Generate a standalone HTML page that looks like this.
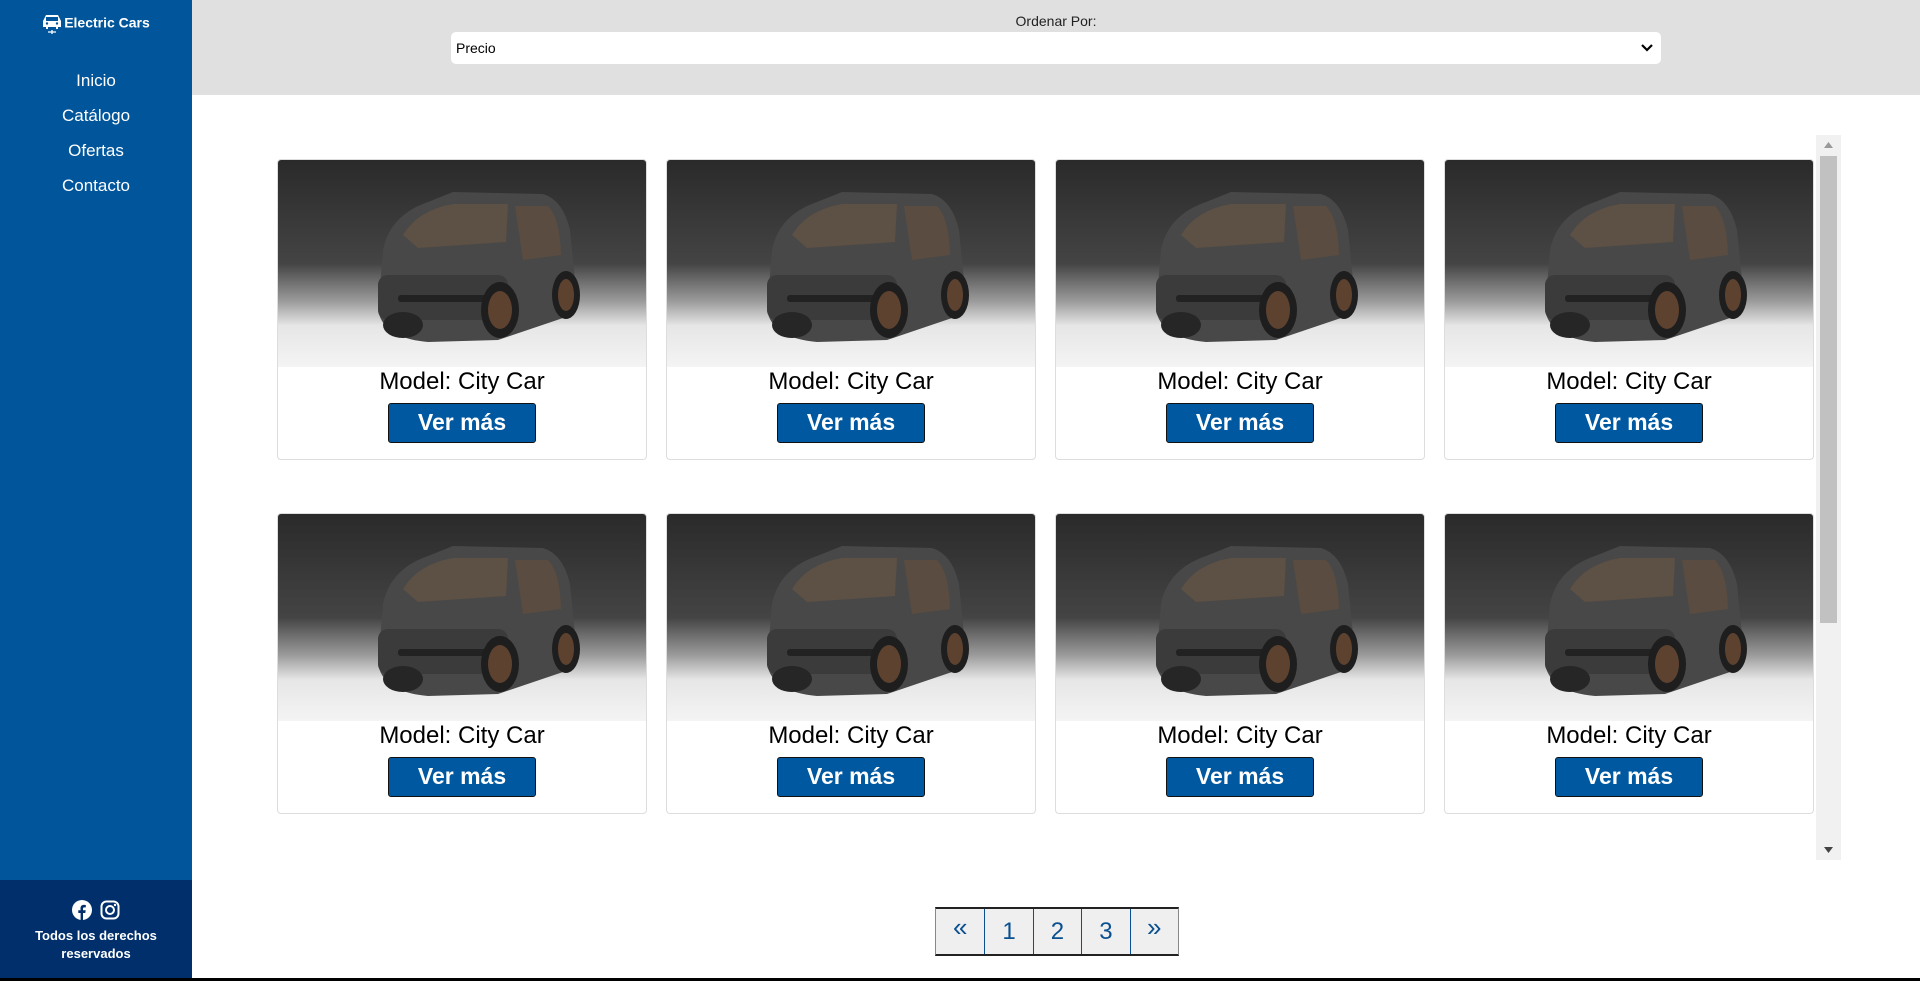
<!DOCTYPE html>
<html><head><meta charset="utf-8"><style>
*{box-sizing:border-box;margin:0;padding:0}
body{width:1920px;height:981px;overflow:hidden;font-family:"Liberation Sans",sans-serif;background:#fff;position:relative}
.side{position:absolute;left:0;top:0;width:192px;height:981px;background:#00559b}
.logo{position:absolute;top:12px;left:0;width:192px;text-align:center;color:#fff;font-weight:bold;font-size:14px}
.logo svg{vertical-align:middle;margin-right:2px}
.nav{position:absolute;top:69px;width:192px;text-align:center}
.nav div{color:#fff;font-size:17px;height:35px;line-height:24px}
.foot{position:absolute;left:0;top:880px;width:192px;height:98px;background:#002f6b;text-align:center;color:#fff;font-weight:bold;font-size:13px}
.icons{margin-top:20px;height:22px}
.icons svg{margin:0 4px;vertical-align:middle}
.bl{position:absolute;left:0;top:978px;width:1920px;height:3px;background:#000}
.top{position:absolute;left:192px;top:0;width:1728px;height:95px;background:#e0e0e0}
.lbl{position:absolute;left:0;width:1728px;top:13px;text-align:center;font-size:14px;color:#222}
.sel{position:absolute;left:259px;top:32px;width:1210px;height:32px;background:#fff;border-radius:5px;font-size:14px;padding:8px 5px;color:#000}
.sel svg{position:absolute;right:8px;top:12px}
.sb{position:absolute;left:1816px;top:135px;width:25px;height:725px;background:#f1f1f1}
.thumb{position:absolute;left:4px;top:21px;width:17px;height:467px;background:#c1c1c1}
.card{position:absolute;width:370px;height:301px;border:1px solid #ddd;border-radius:4px;background:#fff;text-align:center;overflow:hidden}
.card svg{display:block}
.card h3{font-weight:normal;font-size:24px;color:#000;margin-top:0;height:32px;line-height:30px}
.btn{display:inline-block;margin-top:4px;width:148px;height:40px;background:#0059a0;border:1.5px solid #111;border-radius:3px;color:#fff;font-weight:bold;font-size:23px;line-height:36px}
.pg{position:absolute;left:935px;top:907px;height:49px;display:flex;border-top:2px solid #222;border-bottom:2px solid #222;border-left:1px solid #888;border-right:1px solid #888;background:#efefef}
.pg div{width:48.4px;text-align:center;color:#0a4f8f;font-size:24px;line-height:45px;border-left:1px solid #0a4f8f}
.pg div.a{line-height:36px;font-size:26px}
.pg div:first-child{border-left:none}
</style></head><body>
<div class="side">
 <div class="logo"><svg width="20" height="24" viewBox="0 0 20 24"><path d="M4 3h12l3 6v6h-3v2h-2v-2H6v2H4v-2H1V9z" fill="#fff"/><rect x="4" y="5" width="12" height="4" fill="#00559b"/><circle cx="5" cy="11.5" r="1.2" fill="#00559b"/><circle cx="15" cy="11.5" r="1.2" fill="#00559b"/><path d="M6 20h8M10 18v4" stroke="#fff" stroke-width="1.3"/></svg>Electric Cars</div>
 <div class="nav"><div>Inicio</div><div>Catálogo</div><div>Ofertas</div><div>Contacto</div></div>
 <div class="foot">
  <div class="icons"><svg width="20" height="20" viewBox="0 0 20 20"><circle cx="10" cy="10" r="10" fill="#fff"/><path d="M11 20v-7h2.3l.4-2.7H11V8.7c0-.8.3-1.3 1.4-1.3h1.4V5c-.3 0-1.1-.1-2-.1-2 0-3.3 1.2-3.3 3.4v2H6.3V13h2.3v7z" fill="#002f6b"/></svg><svg width="20" height="20" viewBox="0 0 20 20"><rect x="1.5" y="1.5" width="17" height="17" rx="5" fill="none" stroke="#fff" stroke-width="2"/><circle cx="10" cy="10" r="4" fill="none" stroke="#fff" stroke-width="2"/><circle cx="15" cy="5" r="1.2" fill="#fff"/></svg></div>
  <div style="margin-top:5px;line-height:18px">Todos los derechos<br>reservados</div>
 </div>
</div>
<div class="bl"></div>
<div class="top"><div class="lbl">Ordenar Por:</div><div class="sel">Precio<svg width="12" height="8" viewBox="0 0 12 8"><path d="M1 1l5 5 5-5" fill="none" stroke="#000" stroke-width="2.2"/></svg></div></div>
<svg width="0" height="0" style="position:absolute"><defs>
<linearGradient id="bg" x1="0" y1="0" x2="0" y2="1"><stop offset="0" stop-color="#2a2a2a"/><stop offset=".5" stop-color="#444"/><stop offset=".68" stop-color="#9a9a9a"/><stop offset=".8" stop-color="#e6e6e6"/><stop offset="1" stop-color="#f4f4f4"/></linearGradient>
<g id="car">
<rect width="370" height="207" fill="url(#bg)"/>
<path d="M105 90 Q112 55 150 42 L175 32 L265 34 Q285 40 292 70 L298 130 Q300 150 285 158 L220 180 L150 182 Q105 178 100 150 Z" fill="#484848"/>
<path d="M125 75 Q140 50 175 44 L230 44 L228 82 L140 88 Z" fill="#5d5044"/>
<path d="M237 46 L270 46 Q282 58 283 95 L245 100 Z" fill="#5a4c40"/>
<rect x="100" y="115" width="130" height="45" rx="10" fill="#3b3b3b"/>
<rect x="120" y="135" width="95" height="7" rx="3" fill="#222"/>
<ellipse cx="222" cy="150" rx="19" ry="28" fill="#1e1e1e"/><ellipse cx="222" cy="150" rx="12" ry="19" fill="#5e4230"/>
<ellipse cx="288" cy="135" rx="14" ry="24" fill="#1e1e1e"/><ellipse cx="288" cy="135" rx="8" ry="16" fill="#5e4230"/>
<ellipse cx="125" cy="165" rx="20" ry="13" fill="#262626"/>
</g></defs></svg>
<div class="sb"><div class="thumb"></div><svg style="position:absolute;left:8px;top:7px" width="9" height="6"><path d="M0 6L4.5 0 9 6z" fill="#999"/></svg><svg style="position:absolute;left:8px;top:712px" width="9" height="6"><path d="M0 0L4.5 6 9 0z" fill="#444"/></svg></div>

<div class="card" style="left:277px;top:159px"><svg width="370" height="207"><use href="#car"/></svg><h3>Model: City Car</h3><span class="btn">Ver más</span></div>
<div class="card" style="left:666px;top:159px"><svg width="370" height="207"><use href="#car"/></svg><h3>Model: City Car</h3><span class="btn">Ver más</span></div>
<div class="card" style="left:1055px;top:159px"><svg width="370" height="207"><use href="#car"/></svg><h3>Model: City Car</h3><span class="btn">Ver más</span></div>
<div class="card" style="left:1444px;top:159px"><svg width="370" height="207"><use href="#car"/></svg><h3>Model: City Car</h3><span class="btn">Ver más</span></div>
<div class="card" style="left:277px;top:513px"><svg width="370" height="207"><use href="#car"/></svg><h3>Model: City Car</h3><span class="btn">Ver más</span></div>
<div class="card" style="left:666px;top:513px"><svg width="370" height="207"><use href="#car"/></svg><h3>Model: City Car</h3><span class="btn">Ver más</span></div>
<div class="card" style="left:1055px;top:513px"><svg width="370" height="207"><use href="#car"/></svg><h3>Model: City Car</h3><span class="btn">Ver más</span></div>
<div class="card" style="left:1444px;top:513px"><svg width="370" height="207"><use href="#car"/></svg><h3>Model: City Car</h3><span class="btn">Ver más</span></div>

<div class="pg"><div class="a">«</div><div>1</div><div>2</div><div>3</div><div class="a">»</div></div>
</body></html>
